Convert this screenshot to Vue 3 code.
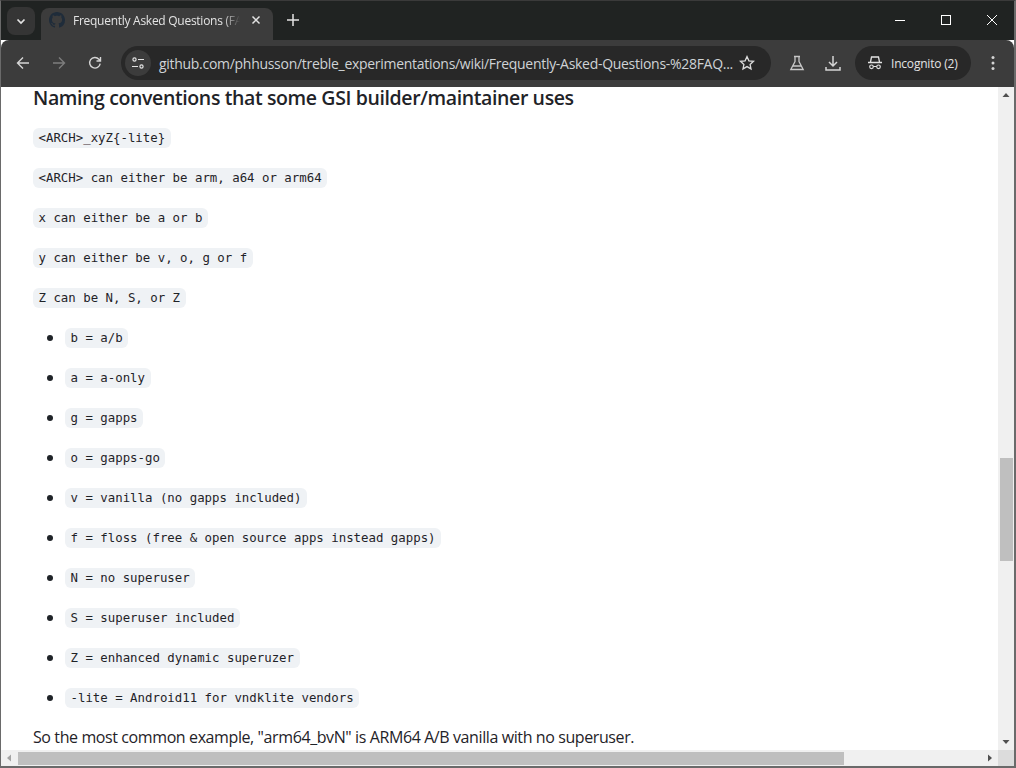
<script setup>
const paragraphs = ['<ARCH>_xyZ{-lite}', '<ARCH> can either be arm, a64 or arm64', 'x can either be a or b', 'y can either be v, o, g or f', 'Z can be N, S, or Z']
const items = ['b = a/b', 'a = a-only', 'g = gapps', 'o = gapps-go', 'v = vanilla (no gapps included)', 'f = floss (free & open source apps instead gapps)', 'N = no superuser', 'S = superuser included', 'Z = enhanced dynamic superuzer', '-lite = Android11 for vndklite vendors']
</script>

<template>
  <div class="window">
    <div class="tabstrip">
      <button class="switcher">
        <svg width="12" height="12" viewBox="0 0 12 12"><path d="M2.5 4.5 6 8l3.5-3.5" fill="none" stroke="#e3e3e3" stroke-width="1.7"/></svg>
      </button>
      <div class="tab">
        <svg class="favicon" width="16" height="16" viewBox="0 0 16 16"><path fill="#1f2c3a" d="M8 0C3.58 0 0 3.58 0 8c0 3.54 2.29 6.53 5.47 7.59.4.07.55-.17.55-.38 0-.19-.01-.82-.01-1.49-2.01.37-2.53-.49-2.69-.94-.09-.23-.48-.94-.82-1.13-.28-.15-.68-.52-.01-.53.63-.01 1.08.58 1.23.82.72 1.21 1.87.87 2.33.66.07-.52.28-.87.51-1.07-1.78-.2-3.64-.89-3.64-3.95 0-.87.31-1.59.82-2.15-.08-.2-.36-1.02.08-2.12 0 0 .67-.21 2.2.82.64-.18 1.32-.27 2-.27s1.36.09 2 .27c1.53-1.04 2.2-.82 2.2-.82.44 1.1.16 1.92.08 2.12.51.56.82 1.27.82 2.15 0 3.07-1.87 3.75-3.65 3.95.29.25.54.73.54 1.48 0 1.07-.01 1.93-.01 2.2 0 .21.15.46.55.38A8.01 8.01 0 0 0 16 8c0-4.42-3.58-8-8-8z"/></svg>
        <span class="tab-title">Frequently Asked Questions (FA</span>
        <svg class="tab-close" width="10" height="10" viewBox="0 0 10 10"><path d="M1.5 1.5l7 7m0-7-7 7" stroke="#e3e3e3" stroke-width="1.5"/></svg>
      </div>
      <svg class="newtab" width="14" height="14" viewBox="0 0 14 14"><path d="M7 1v12M1 7h12" stroke="#e3e3e3" stroke-width="1.5"/></svg>
      <div class="caption">
        <svg width="46" height="12" viewBox="0 0 46 12"><path d="M18 6.5h10" stroke="#fff"/></svg>
        <svg width="46" height="12" viewBox="0 0 46 12"><rect x="18.5" y="1.5" width="9" height="9" fill="none" stroke="#fff"/></svg>
        <svg width="46" height="12" viewBox="0 0 46 12"><path d="M18 1l10 10m0-10-10 10" stroke="#fff"/></svg>
      </div>
    </div>
    <div class="toolbar">
      <svg class="nav" width="16" height="16" viewBox="0 0 16 16"><path d="M14 8H2.500M8 2.500 2.500 8 8 13.500" fill="none" stroke="#d5d5d5" stroke-width="1.4"/></svg>
      <svg class="nav" width="16" height="16" viewBox="0 0 16 16"><path d="M2 8h11.500M8 2.500 13.500 8 8 13.500" fill="none" stroke="#7d7d7d" stroke-width="1.4"/></svg>
      <svg class="nav" width="16" height="16" viewBox="0 0 16 16"><path d="M13.200 8.600a5.300 5.300 0 1 1-1.300-4.400L13.500 6M13.500 2v4h-4" fill="none" stroke="#d5d5d5" stroke-width="1.4"/></svg>
      <div class="omnibox">
        <span class="site-icon">
          <svg width="14" height="14" viewBox="0 0 14 14"><g fill="none" stroke="#e3e3e3" stroke-width="1.2"><circle cx="3.500" cy="3.500" r="1.600"/><path d="M7 3.500h6M1 10.500h6"/><circle cx="10.500" cy="10.500" r="1.600"/></g></svg>
        </span>
        <span class="url">github.com/phhusson/treble_experimentations/wiki/Frequently-Asked-Questions-%28FAQ...</span>
        <svg class="star" width="16" height="16" viewBox="0 0 16 16"><path d="M8 1.600l1.900 4.200 4.600.5-3.400 3.100.9 4.500L8 11.600l-4 2.300.9-4.500L1.500 6.300l4.600-.5z" fill="none" stroke="#dcdcdc" stroke-width="1.300"/></svg>
      </div>
      <svg class="flask" width="16" height="16" viewBox="0 0 16 16"><path d="M5 1.500h6M6 1.500v5L1.800 14.500h12.400L10 6.500v-5M4 11h8" fill="none" stroke="#c8c8c8" stroke-width="1.300"/></svg>
      <svg class="download" width="16" height="16" viewBox="0 0 16 16"><path d="M8 1v9.500M4 7l4 4 4-4M1 12v3h14v-3" fill="none" stroke="#d5d5d5" stroke-width="1.500"/></svg>
      <div class="incognito">
        <svg width="16" height="14" viewBox="0 0 16 14"><path d="M0 6.500h14M2.500 6l1-5h7l1 5" fill="none" stroke="#e3e3e3" stroke-width="1.300"/><circle cx="3.500" cy="10.800" r="1.800" fill="none" stroke="#e3e3e3" stroke-width="1.200"/><circle cx="10.500" cy="10.800" r="1.800" fill="none" stroke="#e3e3e3" stroke-width="1.200"/><path d="M5.300 10.500h3.400" stroke="#e3e3e3"/></svg>
        <span>Incognito (2)</span>
      </div>
      <svg class="menu" width="4" height="16" viewBox="0 0 4 16"><circle cx="2" cy="2.500" r="1.500" fill="#d5d5d5"/><circle cx="2" cy="8" r="1.500" fill="#d5d5d5"/><circle cx="2" cy="13.500" r="1.500" fill="#d5d5d5"/></svg>
    </div>
    <div class="viewport">
      <div class="page">
        <h3>Naming conventions that some GSI builder/maintainer uses</h3>
        <p v-for="p in paragraphs" :key="p"><code>{{ p }}</code></p>
        <ul>
          <li v-for="i in items" :key="i"><code>{{ i }}</code></li>
        </ul>
        <p class="plain">So the most common example, "arm64_bvN" is ARM64 A/B vanilla with no superuser.</p>
      </div>
      <div class="vbar">
        <svg width="16" height="17" viewBox="0 0 16 17"><path d="M4.500 10h7L8 6z" fill="#505050"/></svg>
        <div class="vtrack"><div class="vthumb"></div></div>
        <svg width="16" height="17" viewBox="0 0 16 17"><path d="M4.500 7h7L8 11z" fill="#505050"/></svg>
      </div>
    </div>
    <div class="hbar">
      <svg width="17" height="16" viewBox="0 0 17 16"><path d="M10 4.500v7L6 8z" fill="#a3a3a3"/></svg>
      <div class="hthumb"></div>
      <div class="hspace"></div>
      <svg width="17" height="16" viewBox="0 0 17 16"><path d="M7 4.500v7l4-3.500z" fill="#505050"/></svg>
      <div class="corner"></div>
    </div>
  </div>
</template>

<style>
html, body { margin: 0; overflow: hidden; background: #fff; }
</style>

<style scoped>
.window {
  width: 1016px;
  height: 768px;
  box-sizing: border-box;
  display: flex;
  flex-direction: column;
  overflow: hidden;
  border-style: solid;
  border-width: 1px 2px 2px 1px;
  border-color: #3a3a3a #6a6a6a #6a6a6a #6a6a6a;
  font-family: "Open Sans", "Noto Sans", sans-serif;
}
.tabstrip {
  height: 39px;
  flex: none;
  background: #202322;
  display: flex;
  align-items: flex-end;
  position: relative;
}
.switcher {
  width: 28px;
  height: 28px;
  margin: 0 6px 5px 6px;
  padding: 0;
  border: 0;
  border-radius: 8px;
  background: #353535;
  display: flex;
  align-items: center;
  justify-content: center;
}
.tab {
  width: 232px;
  height: 32px;
  background: #3c3c3c;
  border-radius: 8px 8px 0 0;
  display: flex;
  align-items: center;
  padding: 0 0 8px 8px;
  box-sizing: border-box;
}
.favicon { flex: none; }
.tab-title {
  margin-left: 8px;
  width: 167px;
  flex: none;
  overflow: hidden;
  white-space: nowrap;
  color: #e3e3e3;
  font-size: 12px;
  letter-spacing: -0.27px;
  -webkit-mask-image: linear-gradient(90deg, #000 90%, transparent);
  mask-image: linear-gradient(90deg, #000 90%, transparent);
}
.tab-close { margin-left: 11px; flex: none; }
.newtab { margin: 0 0 13px 13px; }
.caption {
  margin-left: auto;
  display: flex;
  align-self: flex-start;
  margin-top: 13px;
  margin-right: -1px;
}
.toolbar {
  height: 47px;
  flex: none;
  background: #3c3c3c;
  border-radius: 8px 8px 0 0;
  display: flex;
  align-items: center;
  box-sizing: border-box;
  padding: 0 0 1px 14px;
}
.nav { margin-right: 20px; flex: none; }
.omnibox {
  width: 650px;
  height: 34px;
  margin-left: -2px;
  background: #282828;
  border-radius: 17px;
  display: flex;
  align-items: center;
  flex: none;
  box-sizing: border-box;
  padding-left: 4px;
}
.site-icon {
  width: 26px;
  height: 26px;
  border-radius: 50%;
  background: #3c3c3c;
  display: flex;
  align-items: center;
  justify-content: center;
  flex: none;
}
.url {
  margin-left: 8px;
  width: 571px;
  flex: none;
  white-space: nowrap;
  color: #cfd3d6;
  font-size: 14px;
  letter-spacing: -0.29px;
}
.star { margin-left: 9px; flex: none; }
.flask { margin-left: 18px; flex: none; }
.download { margin-left: 20px; flex: none; }
.incognito {
  width: 116px;
  height: 34px;
  margin-left: 14px;
  flex: none;
  background: #282828;
  border-radius: 17px;
  display: flex;
  align-items: center;
  box-sizing: border-box;
  padding-left: 13px;
  gap: 7px;
  color: #e3e3e3;
  font-size: 12px;
  letter-spacing: -0.2px;
}
.menu { margin-left: 20px; flex: none; }
.viewport {
  flex: 1;
  min-height: 0;
  display: flex;
  background: #fff;
}
.page {
  flex: 1;
  min-width: 0;
  overflow: hidden;
  padding-left: 32px;
  color: #1f2328;
  font-size: 16px;
  line-height: 24px;
}
h3 {
  margin: 0 0 16px;
  font-size: 19.5px;
  font-weight: 600;
  line-height: 22px;
  letter-spacing: -0.38px;
}
p { margin: 0 0 16px; white-space: nowrap; }
ul { margin: 0 0 16px; padding-left: 32px; }
li { margin-bottom: 16px; }
code {
  font-family: "DejaVu Sans Mono", "Liberation Mono", monospace;
  font-size: 12.38px;
  line-height: 16px;
  padding: 3px 5.5px;
  border-radius: 6px;
  background: #eff2f5;
  white-space: nowrap;
  vertical-align: 1px;
}
.plain { letter-spacing: -0.4px; }
.vbar {
  width: 16px;
  flex: none;
  background: #f0f0f0;
  display: flex;
  flex-direction: column;
}
.vbar svg, .hbar svg { flex: none; }
.vtrack { flex: 1; position: relative; }
.vthumb {
  position: absolute;
  top: 354px;
  height: 103px;
  left: 2px;
  right: 1px;
  background: #bfbfbf;
}
.hbar {
  height: 16px;
  flex: none;
  background: #f0f0f0;
  display: flex;
}
.hthumb { width: 826px; margin: 2px 0 1px; background: #bfbfbf; flex: none; }
.hspace { flex: 1; }
.corner { width: 16px; background: #dcdcdc; flex: none; }
</style>
